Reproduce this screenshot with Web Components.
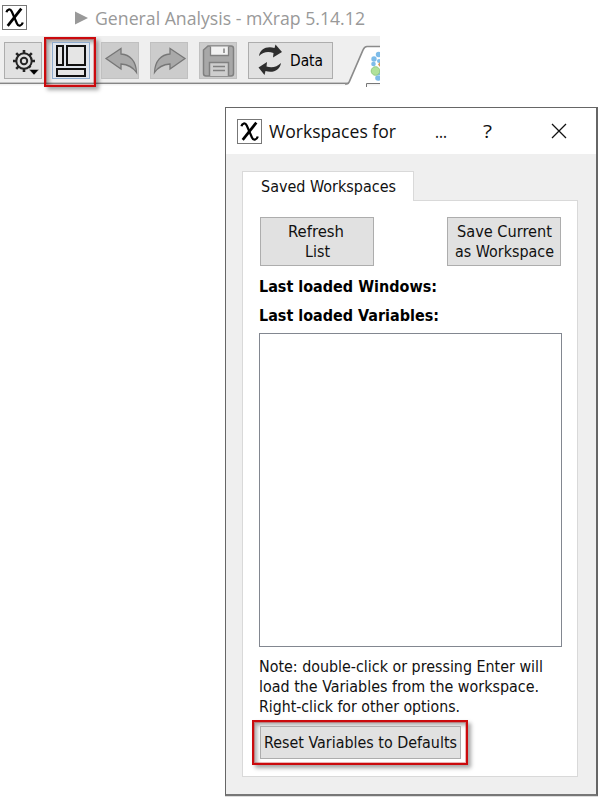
<!DOCTYPE html>
<html lang="en">
<head>
<meta charset="utf-8">
<title>Workspaces</title>
<style>
html,body{margin:0;background:#fff}
body{width:598px;height:797px;overflow:hidden}
</style>
</head>
<body>
<workspace-demo></workspace-demo>
<script>
const define = (name, html, setup) => {
  const t = document.createElement('template');
  t.innerHTML = html;
  customElements.define(name, class extends HTMLElement {
    connectedCallback() {
      if (this.shadowRoot) return;
      this.attachShadow({mode: 'open'}).append(t.content.cloneNode(true));
      if (setup) setup.call(this, this.shadowRoot);
    }
  });
};

/* A single line of text, condensed or widened to the given width. */
define('fit-text', `<style>
  :host{display:block;white-space:nowrap}
  span{display:inline-block;transform-origin:0 50%}
</style><span><slot></slot></span>`, function (root) {
  const span = root.querySelector('span');
  const want = +this.getAttribute('w');
  this.style.width = want + 'px';
  span.style.transform = 'scaleX(' + want / span.getBoundingClientRect().width + ')';
});

define('chi-logo', `<style>
  :host{display:block;width:25px;height:25px;flex:none}
  svg{display:block}
</style>
<svg width="25" height="25" viewBox="0 0 25 25" fill="none" stroke="#000">
  <rect x=".5" y=".5" width="24" height="24" fill="#fff" stroke="#777"/>
  <path d="M4.500 7.200C5 4.200 8.200 3.300 9.700 6.400L15 18.600C16.300 21.700 19.600 21.200 20.800 17.500" stroke-width="2.300"/>
  <path d="M19.300 3.600L5.700 20.800" stroke-width="2.700"/>
</svg>`);

define('push-button', `<style>
  :host{box-sizing:border-box;display:flex;flex-direction:column;align-items:center;justify-content:center;flex:none;background:#e1e1e1;border:1px solid #adadad;line-height:20px}
  :host([disabled]){background:#ccc;border-color:#c0c0c0}
  :host([active]){background:#e0e5ec;border-color:#8eabcd}
</style><slot></slot>`);

define('call-out', `<style>
  :host{box-sizing:border-box;display:block;flex:none;border:2px solid #cb0a0d;box-shadow:3px 3px 4px rgba(0,0,0,.35),inset 3px 3px 4px rgba(0,0,0,.35);outline:1px solid rgba(200,13,16,.3);outline-offset:-3px}
</style><slot></slot>`);

define('app-titlebar', `<style>
  :host{display:flex;align-items:center;height:36px;padding-left:2px;box-sizing:border-box;font:17.6px/24px "Open Sans","Noto Sans",sans-serif;color:#999}
  chi-logo{margin:-2px 47px 0 0}
  svg{margin:0 7px 0 0;flex:none}
</style>
<chi-logo></chi-logo>
<svg width="14" height="14" fill="#999"><path d="M1 .5L14 7L1 13.5Z"/></svg>
<fit-text w="270">General Analysis - mXrap 5.14.12</fit-text>`);

define('app-toolbar', `<style>
  :host{display:flex;box-sizing:border-box;width:380px;height:51px;background:linear-gradient(#efefef 0 46px,#c4c4c4 46px 47px,#868686 47px 48px,#f2f2f2 48px 49px,#fff 50px);padding:6px 0 0 4px}
  push-button{width:38px;height:37px}
  svg{display:block}
  call-out{width:52px;height:50px;margin:-5px 5px 0 2px;padding:3px 0 0 6px}
  .gap{margin-right:11px}
  .data{width:85px;flex-direction:row;justify-content:flex-start;font-size:15px;color:#000}
  .tab{margin:3px 0 0 12px;flex:none}
</style>
<push-button><svg width="36" height="35" fill="none" stroke="#252525">
  <circle cx="19" cy="18" r="7.700" stroke-width="2"/><circle cx="19" cy="18" r="3.200" stroke-width="2"/>
  <path stroke-width="2.600" d="M19 10.500V7M19 25.500V29M11.500 18H8M26.500 18H30M13.700 12.700L11.200 10.200M24.300 12.700L26.800 10.200M13.700 23.300L11.200 25.800M24.300 23.300L25.500 24.500"/>
  <path d="M24 26.500H34L29 32Z" fill="#000" stroke="#ddd" stroke-width=".5"/></svg></push-button>
<call-out><push-button active><svg width="36" height="35" fill="#e5e5e5" stroke="#111" stroke-width="2">
  <rect x="4" y="3" width="6" height="19"/><rect x="14" y="3" width="18" height="19"/><rect x="4" y="26" width="28" height="7"/></svg></push-button></call-out>
<push-button disabled class="gap"><svg width="36" height="35"><path d="M4 15.500L19 5.500V11C28 11.500 34 18 34.500 29.500C30.500 23.500 26 21.500 19 21V26Z" fill="#a9a9a9" stroke="#777" stroke-width="1.300"/></svg></push-button>
<push-button disabled class="gap"><svg width="36" height="35"><path d="M34 15.500L19 5.500V11C10 11.500 4 18 3.500 29.500C7.500 23.500 12 21.500 19 21V26Z" fill="#a9a9a9" stroke="#777" stroke-width="1.300"/></svg></push-button>
<push-button disabled class="gap"><svg width="36" height="35" fill="none" stroke="#808080">
  <path d="M8 3H31Q33.500 3 33.500 5.500V30.500Q33.500 33 31 33H6Q3.500 33 3.500 30.500V7Z" fill="#a8a8a8" stroke-width="1.500"/>
  <path d="M10.500 3.500V12.500H28.500V3.500" fill="#f2f2f2" stroke-width="1.300"/><path d="M24 5.500V10" stroke-width="1.500"/>
  <path d="M9.500 33V19.500H28.500V33" fill="#cecece" stroke-width="1.500"/><path d="M13 23.500H25M13 27.500H25" stroke-width="1.500"/></svg></push-button>
<push-button class="data"><svg width="41" height="35" fill="#2e2e2e">
  <path d="M10 13C11 6 18 2.500 25.500 5L26.500 1.500L33 9L24 14.500L24.500 10C19 8 14 9 10 13Z"/>
  <path d="M32 20C31 27 24 30.500 16.500 28L15.500 32L9.500 24.500L18 19L17.500 23.500C23 25 28 24 32 20Z"/></svg>
  <fit-text w="33">Data</fit-text></push-button>
<svg class="tab" width="35" height="42" fill="none">
  <path d="M1 39L3.500 38L18 5Q19.500 1.500 22 1.500H35V38H22V42H2Z" fill="#fff"/>
  <path d="M0 38.800H2Q3.600 38.800 4.400 36.500L18 5Q19.500 1.500 22 1.500H35" stroke="#8b8b8b" stroke-width="1.700"/>
  <path d="M35 38.500H21.500V42" stroke="#777"/>
  <g fill="#7ebce9"><circle cx="29" cy="14" r="2.700"/><circle cx="33.500" cy="9.500" r="2.700"/><circle cx="34" cy="16" r="2"/><circle cx="28.500" cy="19" r="2.300"/><circle cx="33" cy="33" r="2.800"/><circle cx="34" cy="28" r="2.300"/></g>
  <circle cx="30.500" cy="26" r="4.300" fill="#b0e19a" stroke="#92ca83"/>
  <path d="M35 17L33 19.500L35 22Z" fill="#d59b58"/>
</svg>`);

define('dialog-titlebar', `<style>
  :host{display:flex;align-items:center;height:46px;background:#fff;padding-left:11px;font:18px/24px "Open Sans","Noto Sans",sans-serif;color:#111}
  chi-logo{margin-right:7px}
  .dots{margin-left:39px}
  .help{margin-left:36px}
  svg{margin-left:58px}
</style>
<chi-logo></chi-logo><fit-text w="127">Workspaces for</fit-text>
<fit-text class="dots" w="12">...</fit-text><fit-text class="help" w="9">?</fit-text>
<svg width="18" height="18" stroke="#111" stroke-width="1.300"><path d="M2 2L16 16M16 2L2 16"/></svg>`);

define('tab-panel', `<style>
  :host{display:flex;flex-direction:column;height:606px;width:336px}
  .tab{box-sizing:border-box;width:172px;height:30px;margin-bottom:-1px;border:1px solid #d9d9d9;border-bottom:0;background:#fff;padding:5px 0 0 18px;z-index:1;line-height:20px}
  .body{box-sizing:border-box;flex:1;border:1px solid #d9d9d9;background:#fff;padding:16px 15px 0 16px}
</style>
<div class="tab"><slot name="tab"></slot></div><div class="body"><slot></slot></div>`);

define('workspaces-dialog', `<style>
  :host{display:block;box-sizing:border-box;width:373px;height:689px;border:1px solid #666;border-right-width:2px;border-bottom:2px solid #777;background:#efefef;box-shadow:0 1px 0 #ddd}
  tab-panel{margin:17px 0 0 16px}
  .row{display:flex;justify-content:space-between;padding:0 1px}
  .row push-button{width:114px;height:49px}
  .bold{font-weight:700;line-height:29px;margin-top:7px;color:#000}
  .list{box-sizing:border-box;height:314px;width:303px;border:1px solid #828790;margin-top:2px}
  .note{line-height:20px;margin-top:10px}
  call-out{width:216px;height:45px;margin:3px 0 0 -7px;padding:4px 0 0 6px}
  call-out push-button{width:201px;height:33px}
  .first{margin-left:-2px}
</style>
<dialog-titlebar></dialog-titlebar>
<tab-panel>
  <fit-text slot="tab" w="135">Saved Workspaces</fit-text>
  <div class="row">
    <push-button><fit-text class="first" w="56">Refresh</fit-text><fit-text w="25">List</fit-text></push-button>
    <push-button><fit-text w="95">Save Current</fit-text><fit-text w="99">as Workspace</fit-text></push-button>
  </div>
  <div class="bold"><fit-text w="178">Last loaded Windows:</fit-text><fit-text w="180">Last loaded Variables:</fit-text></div>
  <div class="list"></div>
  <div class="note"><fit-text w="284">Note: double-click or pressing Enter will</fit-text><fit-text w="280">load the Variables from the workspace.</fit-text><fit-text w="201">Right-click for other options.</fit-text></div>
  <call-out><push-button><fit-text w="193">Reset Variables to Defaults</fit-text></push-button></call-out>
</tab-panel>`);

define('workspace-demo', `<style>
  :host{display:flex;flex-direction:column;width:598px;height:797px;font:15px/20px "DejaVu Sans Condensed","DejaVu Sans",sans-serif;font-stretch:condensed;color:#111}
  workspaces-dialog{margin:20px 0 0 225px}
</style>
<app-titlebar></app-titlebar><app-toolbar></app-toolbar><workspaces-dialog></workspaces-dialog>`);
</script>
</body>
</html>
